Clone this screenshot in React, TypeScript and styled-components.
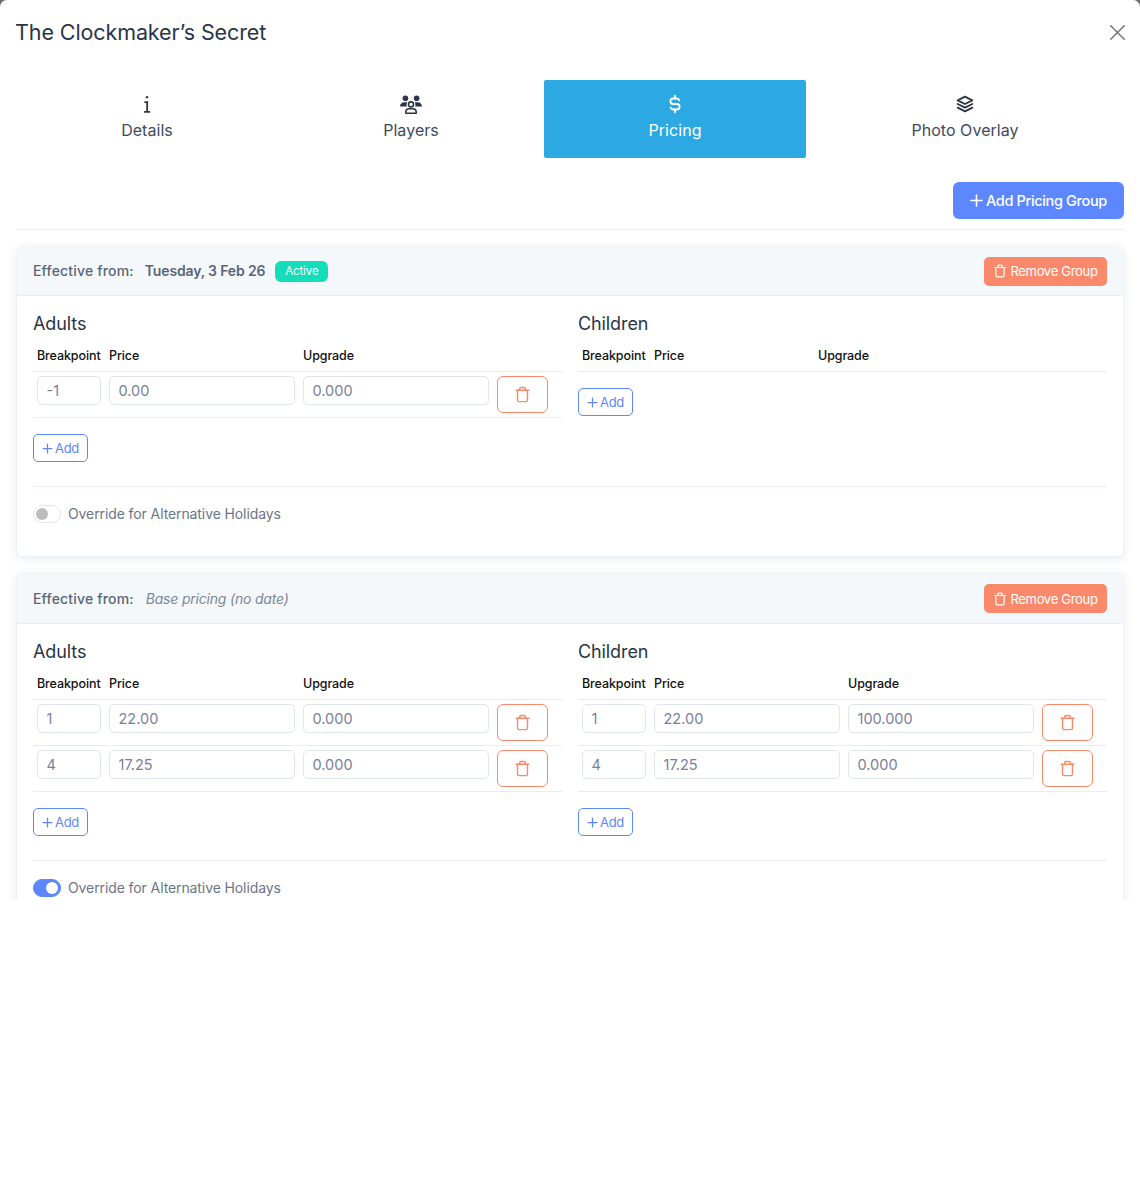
import { createGlobalStyle, styled } from "styled-components"
import { LuPlus, LuTrash, LuX } from "react-icons/lu"
import { TbCurrencyDollar, TbStack2 } from "react-icons/tb"

const GlobalStyle = createGlobalStyle`
    html, body {
        margin: 0;
        padding: 0;
        background: #fff;
    }
    body {
        font-family: "Inter", "Liberation Sans", sans-serif;
    }
    * {
        box-sizing: border-box;
    }
`

const Backdrop = styled.div`
    height: 900px;
    overflow: hidden;
    background: linear-gradient(to bottom, #6f6f6f 0, #6f6f6f 8px, #fff 8px);
`
const Modal = styled.div`
    height: 900px;
    overflow: hidden;
    padding: 0 16px;
    background: #fff;
    border-radius: 7px 7px 0 0;
`
const ModalHeader = styled.div`
    height: 64px;
    display: flex;
    align-items: center;
    justify-content: space-between;
`
const Title = styled.h4`
    margin: 0 0 0 -1px;
    font-size: 21.5px;
    font-weight: 400;
    letter-spacing: -0.1px;
    color: #2a3547;
`
const CloseIcon = styled(LuX)`
    font-size: 27px;
    color: #6b7480;
    stroke-width: 1.3;
    margin-right: -6.5px;
`
const Tabs = styled.div`
    margin-top: 16px;
    display: grid;
    grid-template-columns: 262px 266px 262px 1fr;
    height: 78px;
`
const Tab = styled.div<{ $active?: boolean }>`
    display: flex;
    flex-direction: column;
    align-items: center;
    gap: 3px;
    padding-top: 13px;
    font-size: 16px;
    letter-spacing: 0.05px;
    line-height: 24px;
    color: ${(p) => (p.$active ? "#fff" : "#3f4a5c")};
    background: ${(p) => (p.$active ? "#2ca9e2" : "transparent")};
    border-radius: 2px;
    & > svg {
        font-size: 22px;
        height: 22px;
        color: ${(p) => (p.$active ? "#fff" : "#2a3547")};
    }
`
const Toolbar = styled.div`
    margin-top: 24px;
    display: flex;
    justify-content: flex-end;
    padding-bottom: 10px;
    border-bottom: 1px solid #e9edf3;
`
const AddGroupButton = styled.button`
    height: 37px;
    width: 171px;
    display: flex;
    align-items: center;
    justify-content: center;
    gap: 0;
    padding: 0 3px 0 0;
    border: 0;
    border-radius: 6px;
    background: #5d87ff;
    color: #fff;
    font-family: inherit;
    font-size: 14.5px;
    font-weight: 500;
    letter-spacing: -0.35px;
    & > svg {
        font-size: 19px;
    }
`
const Card = styled.section`
    margin-top: 16px;
    border: 1px solid #eef1f5;
    border-radius: 6px;
    background: #fff;
    box-shadow: 0 2px 10px rgba(80, 100, 140, 0.12);
`
const CardHeader = styled.div<{ $tall?: boolean }>`
    height: ${(p) => (p.$tall ? "50px" : "49px")};
    display: flex;
    align-items: center;
    padding: 0 16px;
    background: #f5f8fb;
    border-bottom: 1px solid #e9edf3;
    border-radius: 6px 6px 0 0;
    font-size: 14px;
    letter-spacing: -0.15px;
    color: #5a6579;
`
const EffectiveLabel = styled.span<{ $raised?: boolean }>`
    font-weight: 500;
    letter-spacing: 0.18px;
    margin-right: ${(p) => (p.$raised ? "11px" : "12px")};
    padding-bottom: ${(p) => (p.$raised ? "2px" : "0")};
`
const EffectiveDate = styled.span`
    font-weight: 600;
    margin-right: 10px;
    padding-bottom: 2px;
`
const NoDate = styled.span`
    font-style: italic;
    color: #7c8798;
    letter-spacing: -0.2px;
`
const Badge = styled.span`
    height: 21px;
    width: 53px;
    display: flex;
    align-items: center;
    justify-content: center;
    border-radius: 6px;
    background: #13deb9;
    color: #fff;
    font-size: 11.5px;
    letter-spacing: -0.1px;
`
const RemoveGroupButton = styled.button`
    margin-left: auto;
    height: 29px;
    width: 123px;
    display: flex;
    align-items: center;
    justify-content: center;
    gap: 3px;
    border: 0;
    border-radius: 5px;
    background: #fa896b;
    color: #fff;
    font-family: inherit;
    font-size: 13px;
    letter-spacing: -0.3px;
    & > svg {
        font-size: 14px;
    }
`
const CardBody = styled.div`
    padding: 17px 16px 0;
`
const Columns = styled.div`
    display: grid;
    grid-template-columns: 529px 529px;
    column-gap: 16px;
`
const SectionTitle = styled.h5`
    margin: 0;
    height: 22px;
    line-height: 22px;
    font-size: 18px;
    font-weight: 400;
    letter-spacing: -0.1px;
    color: #2a3547;
`
const HeadRow = styled.div<{ $empty?: boolean }>`
    margin-top: 11px;
    height: 26px;
    display: grid;
    grid-template-columns: ${(p) => (p.$empty ? "64px 156px 1fr" : "64px 186px 186px 1fr")};
    column-gap: 8px;
    padding: 0 0 0 4px;
    line-height: 20px;
    font-size: 12.5px;
    font-weight: 500;
    letter-spacing: -0.1px;
    color: #111;
    border-bottom: 1px solid #e9edf3;
`
const Row = styled.div`
    height: 46px;
    display: grid;
    grid-template-columns: 64px 186px 186px 51px;
    column-gap: 8px;
    align-items: start;
    padding: 4px 0 0 4px;
    border-bottom: 1px solid #e9edf3;
`
const Field = styled.input`
    width: 100%;
    height: 29px;
    padding: 0 8.5px;
    border: 1px solid #dfe5ef;
    border-radius: 5px;
    background: #fff;
    outline: none;
    font-family: inherit;
    font-size: 14.5px;
    color: #76819a;
`
const DeleteButton = styled.button`
    height: 37px;
    display: flex;
    align-items: center;
    justify-content: center;
    padding: 0;
    background: #fff;
    border: 1px solid #fa896b;
    border-radius: 6px;
    color: #fa896b;
    & > svg {
        font-size: 17px;
    }
`
const AddButton = styled.button`
    margin-top: 16px;
    width: 55px;
    height: 28px;
    display: flex;
    align-items: center;
    justify-content: center;
    gap: 0;
    padding: 0 2px 0 0;
    background: #fff;
    border: 1px solid #5d87ff;
    border-radius: 5px;
    color: #5d87ff;
    font-family: inherit;
    font-size: 13px;
    letter-spacing: -0.3px;
    & > svg {
        font-size: 15px;
    }
`
const Override = styled.div`
    margin-top: 24px;
    height: 70px;
    padding-top: 18px;
    border-top: 1px solid #e9edf3;
    display: flex;
    align-items: flex-start;
    gap: 7px;
    font-size: 14px;
    line-height: 18px;
    letter-spacing: -0.1px;
    color: #6a7589;
`
const Switch = styled.span<{ $on?: boolean }>`
    width: 28px;
    height: 18px;
    padding: 0 2px;
    display: flex;
    align-items: center;
    justify-content: ${(p) => (p.$on ? "flex-end" : "flex-start")};
    border-radius: 9px;
    border: 1px solid ${(p) => (p.$on ? "#5d87ff" : "#e2e6ec")};
    background: ${(p) => (p.$on ? "#5d87ff" : "#fff")};
    &::after {
        content: "";
        width: 12px;
        height: 12px;
        border-radius: 50%;
        background: ${(p) => (p.$on ? "#fff" : "#bdbdbd")};
    }
`

// serif style "i" used on the details tab
const InfoIcon = () => (
    <svg width="22" height="22" viewBox="0 0 24 24" fill="none" stroke="currentColor" strokeWidth="2" strokeLinecap="round">
        <path d="M12 4.5h.01" strokeWidth="2.6" />
        <path d="M10 10h2.2v10M9.6 20.6h5" />
    </svg>
)

// two solid people behind one outlined person
const PlayersIcon = () => (
    <svg width="24" height="22" viewBox="0 0 24 22" fill="currentColor">
        <circle cx="6.4" cy="5.2" r="2.8" />
        <circle cx="17.6" cy="5.2" r="2.8" />
        <path d="M1 13.6c0-2.6 2-4.4 4.2-4.4h3.1c-.5.7-.8 1.6-.8 2.6 0 .7.2 1.3.5 1.8z" />
        <path d="M23 13.6c0-2.6-2-4.4-4.2-4.4h-3.1c.5.7.8 1.6.8 2.6 0 .7-.2 1.3-.5 1.8z" />
        <circle cx="12" cy="11.4" r="2.5" fill="none" stroke="currentColor" strokeWidth="1.6" />
        <path d="M6.8 20.2v-1c0-2 1.6-3.4 3.4-3.4h3.6c1.8 0 3.4 1.4 3.4 3.4v1z" fill="none" stroke="currentColor" strokeWidth="1.6" strokeLinejoin="round" />
    </svg>
)

type PriceRow = { breakpoint: string; price: string; upgrade: string }

const PriceTable = ({ title, rows, emptyHead }: { title: string; rows: PriceRow[]; emptyHead?: boolean }) => (
    <div>
        <SectionTitle>{title}</SectionTitle>
        <HeadRow $empty={emptyHead}>
            <span>Breakpoint</span>
            <span>Price</span>
            <span>Upgrade</span>
        </HeadRow>
        {rows.map((r) => (
            <Row key={r.breakpoint}>
                <Field defaultValue={r.breakpoint} />
                <Field defaultValue={r.price} />
                <Field defaultValue={r.upgrade} />
                <DeleteButton><LuTrash /></DeleteButton>
            </Row>
        ))}
        <AddButton><LuPlus />Add</AddButton>
    </div>
)

const baseAdults = [
    { breakpoint: "1", price: "22.00", upgrade: "0.000" },
    { breakpoint: "4", price: "17.25", upgrade: "0.000" },
]
const baseChildren = [
    { breakpoint: "1", price: "22.00", upgrade: "100.000" },
    { breakpoint: "4", price: "17.25", upgrade: "0.000" },
]

export default function App() {
    return (
        <>
            <GlobalStyle />
            <Backdrop>
                <Modal>
                    <ModalHeader>
                        <Title>The Clockmaker’s Secret</Title>
                        <CloseIcon />
                    </ModalHeader>
                    <Tabs>
                        <Tab><InfoIcon />Details</Tab>
                        <Tab><PlayersIcon />Players</Tab>
                        <Tab $active><TbCurrencyDollar />Pricing</Tab>
                        <Tab><TbStack2 />Photo Overlay</Tab>
                    </Tabs>
                    <Toolbar>
                        <AddGroupButton><LuPlus />Add Pricing Group</AddGroupButton>
                    </Toolbar>
                    <Card>
                        <CardHeader>
                            <EffectiveLabel $raised>Effective from:</EffectiveLabel>
                            <EffectiveDate>Tuesday, 3 Feb 26</EffectiveDate>
                            <Badge>Active</Badge>
                            <RemoveGroupButton><LuTrash />Remove Group</RemoveGroupButton>
                        </CardHeader>
                        <CardBody>
                            <Columns>
                                <PriceTable title="Adults" rows={[{ breakpoint: "-1", price: "0.00", upgrade: "0.000" }]} />
                                <PriceTable title="Children" rows={[]} emptyHead />
                            </Columns>
                            <Override><Switch />Override for Alternative Holidays</Override>
                        </CardBody>
                    </Card>
                    <Card>
                        <CardHeader $tall>
                            <EffectiveLabel>Effective from:</EffectiveLabel>
                            <NoDate>Base pricing (no date)</NoDate>
                            <RemoveGroupButton><LuTrash />Remove Group</RemoveGroupButton>
                        </CardHeader>
                        <CardBody>
                            <Columns>
                                <PriceTable title="Adults" rows={baseAdults} />
                                <PriceTable title="Children" rows={baseChildren} />
                            </Columns>
                            <Override><Switch $on />Override for Alternative Holidays</Override>
                        </CardBody>
                    </Card>
                </Modal>
            </Backdrop>
        </>
    )
}
